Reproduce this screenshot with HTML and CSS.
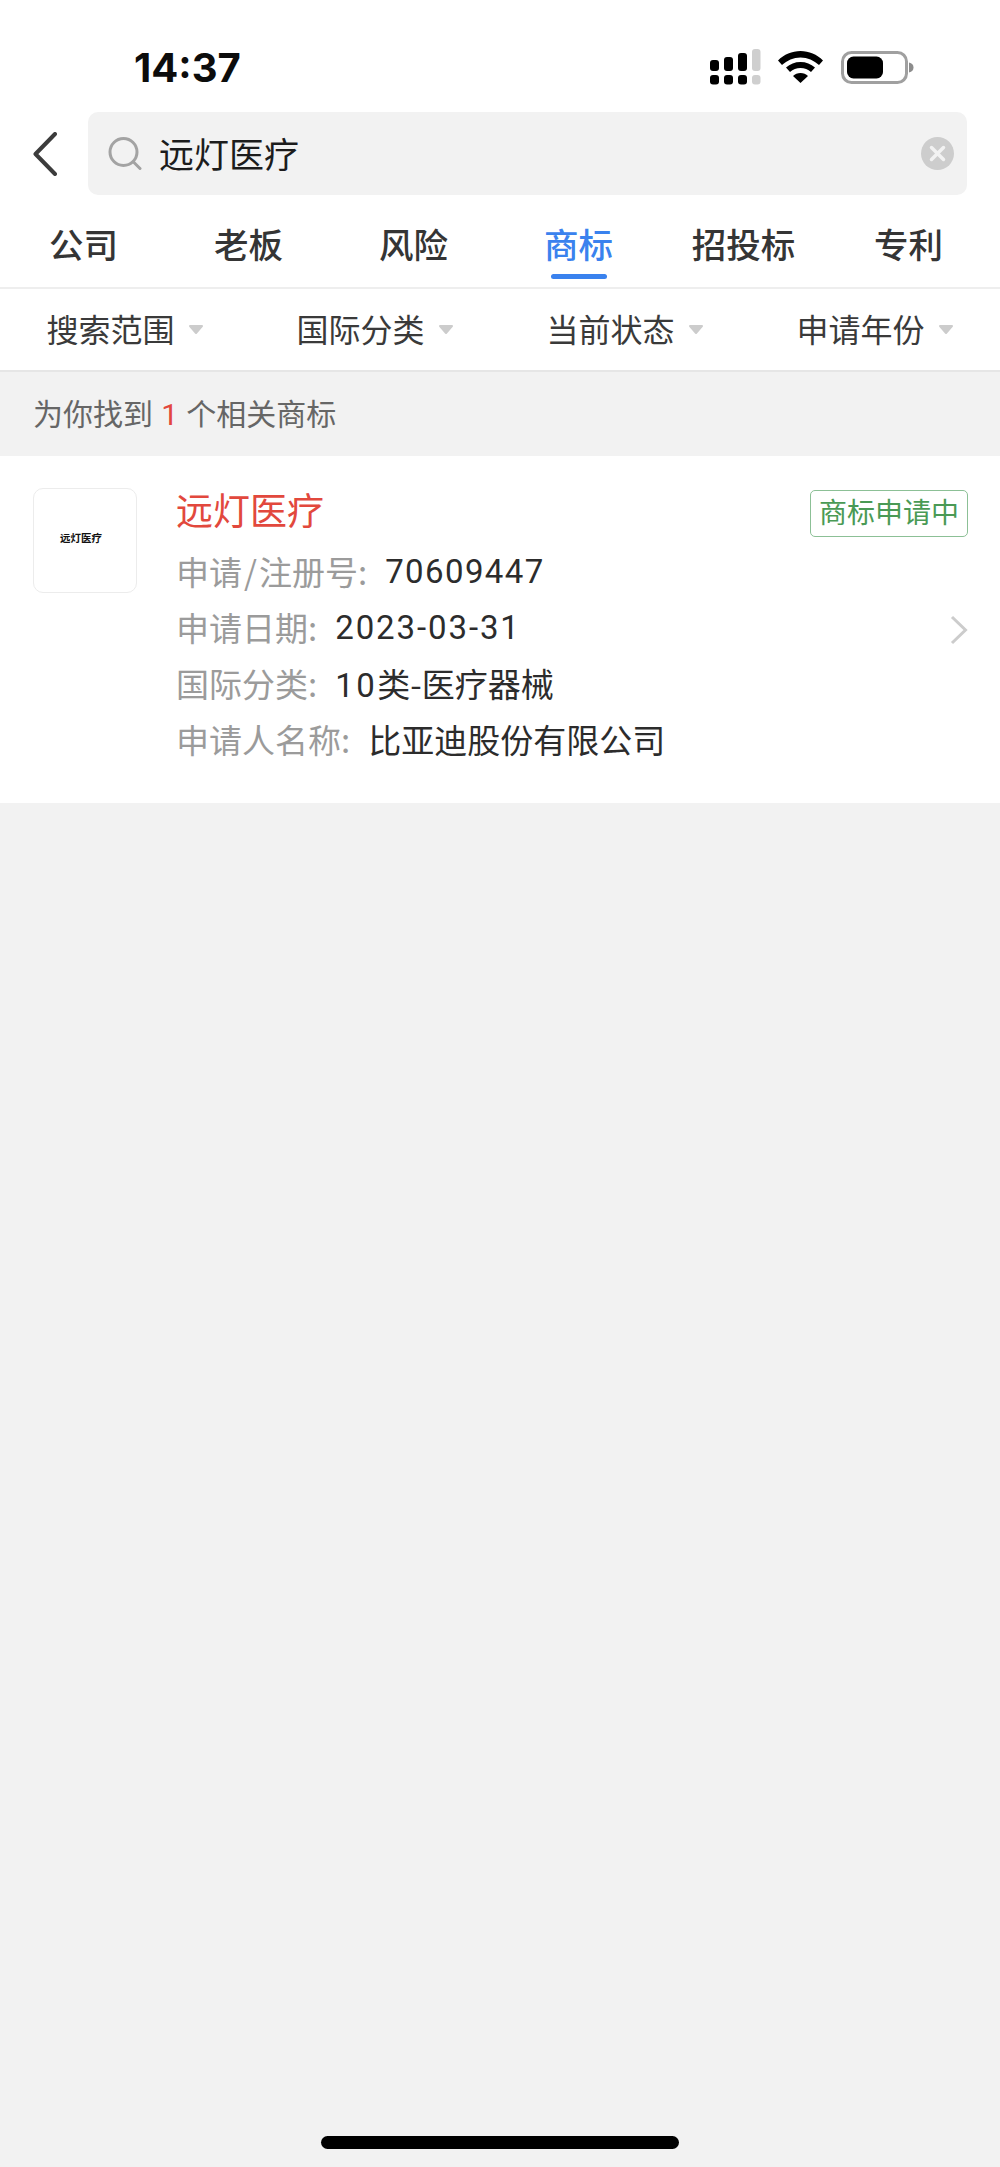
FILE: index.html
```html
<!DOCTYPE html>
<html lang="zh-CN">
<head>
<meta charset="utf-8">
<title>商标搜索</title>
<link rel="stylesheet" href="styles.css">
</head>
<body>
<div class="page">
  <header class="status">
    <span class="clock">14:37</span>
    <div class="status-icons">
      <svg class="ic-signal" width="51" height="36" viewBox="0 0 51 36">
        <rect x="0" y="11" width="9" height="11" rx="3"/>
        <rect x="14" y="8" width="9" height="14" rx="3"/>
        <rect x="28" y="4" width="9" height="18" rx="3"/>
        <rect class="off" x="42" y="0" width="8.500" height="22" rx="3"/>
        <rect x="0" y="26" width="9" height="9.500" rx="3"/>
        <rect x="14" y="26" width="9" height="9.500" rx="3"/>
        <rect x="28" y="26" width="9" height="9.500" rx="3"/>
        <rect class="off" x="42" y="26" width="8.500" height="9.500" rx="3"/>
      </svg>
      <svg class="ic-wifi" width="45" height="32" viewBox="0 0 45 32">
        <path d="M22.500 0C14 0 6 3.500 0 9.500L4 14C9 9.500 15.500 6.500 22.500 6.500C29.500 6.500 36 9.500 41 14L45 9.500C39 3.500 31 0 22.500 0Z"/>
        <path d="M22.500 11C17 11 12 13 8 16.500L12 21C15 18.500 18.500 17 22.500 17C26.500 17 30 18.500 33 21L37 16.500C33 13 28 11 22.500 11Z"/>
        <path d="M22.500 22C19.500 22 17 23 15 25L22.500 32L30 25C28 23 25.500 22 22.500 22Z"/>
      </svg>
      <svg class="ic-battery" width="73" height="33" viewBox="0 0 73 33">
        <rect x="1.500" y="1.500" width="64" height="30" rx="9" class="shell"/>
        <rect x="6" y="5.500" width="36" height="22" rx="6.500"/>
        <path class="nub" d="M68 11.500C71 12 72.500 14 72.500 16.500C72.500 19 71 21 68 21.500Z"/>
      </svg>
    </div>
  </header>

  <div class="search-row">
    <svg class="ic-back" width="24" height="44" viewBox="0 0 24 44">
      <path d="M22 2L2.500 22L22 42"/>
    </svg>
    <div class="search-box">
      <svg class="ic-search" width="34" height="34" viewBox="0 0 34 34">
        <circle cx="15.500" cy="15" r="13.500"/>
        <path d="M25.500 25L32 31.500"/>
      </svg>
      <span class="query">远灯医疗</span>
      <svg class="ic-clear" width="33" height="33" viewBox="0 0 33 33">
        <circle cx="16.500" cy="16.500" r="16.500"/>
        <path d="M10.500 10.500L22.500 22.500M22.500 10.500L10.500 22.500"/>
      </svg>
    </div>
  </div>

  <nav class="tabs">
    <a class="tab">公司</a>
    <a class="tab">老板</a>
    <a class="tab">风险</a>
    <a class="tab active">商标</a>
    <a class="tab">招投标</a>
    <a class="tab">专利</a>
  </nav>

  <div class="filters">
    <div class="filter"><span>搜索范围</span><svg class="caret" width="16" height="11" viewBox="0 0 16 11"><path d="M2 2H14L8 9Z"/></svg></div>
    <div class="filter"><span>国际分类</span><svg class="caret" width="16" height="11" viewBox="0 0 16 11"><path d="M2 2H14L8 9Z"/></svg></div>
    <div class="filter"><span>当前状态</span><svg class="caret" width="16" height="11" viewBox="0 0 16 11"><path d="M2 2H14L8 9Z"/></svg></div>
    <div class="filter"><span>申请年份</span><svg class="caret" width="16" height="11" viewBox="0 0 16 11"><path d="M2 2H14L8 9Z"/></svg></div>
  </div>

  <p class="summary">为你找到 <em>1</em> 个相关商标</p>

  <article class="card">
    <div class="logo"><span>远灯医疗</span></div>
    <div class="info">
      <h2 class="name">远灯医疗</h2>
      <div class="row"><span class="label">申请<span class="slash">/</span>注册号:</span><span class="value digits">70609447</span></div>
      <div class="row"><span class="label">申请日期:</span><span class="value digits date">2023-03-31</span></div>
      <div class="row"><span class="label">国际分类:</span><span class="value"><span class="digits count">10</span>类-医疗器械</span></div>
      <div class="row"><span class="label">申请人名称:</span><span class="value">比亚迪股份有限公司</span></div>
    </div>
    <div class="side">
      <span class="badge">商标申请中</span>
      <svg class="ic-more" width="18" height="30" viewBox="0 0 18 30">
        <path d="M2 2L15.500 15L2 28"/>
      </svg>
    </div>
  </article>

  <div class="filler"></div>
  <footer class="home"><span class="home-bar"></span></footer>
</div>
</body>
</html>
```

FILE: styles.css
```css
* { box-sizing: border-box; }

html, body {
  margin: 0;
  padding: 0;
}

body {
  background: #f2f2f2;
  font-family: "Noto Sans CJK SC", "Liberation Sans", sans-serif;
  color: #333;
}

.page {
  display: flex;
  flex-direction: column;
  min-height: 2167px;
}

/* status bar */
.status {
  height: 112px;
  background: #fff;
  display: flex;
  justify-content: space-between;
  padding: 49px 86px 0 134px;
}

.clock {
  font-family: "Inter", "Liberation Sans", sans-serif;
  font-weight: 700;
  font-size: 40px;
  line-height: 38px;
  color: #0c0c0c;
  height: 38px;
}

.status-icons {
  display: flex;
  align-items: flex-start;
}

.status-icons svg { display: block; flex: none; }
.ic-wifi { margin: 2px 0 0 17px; }
.ic-battery { margin: 2px 0 0 18px; }
.ic-signal .off { fill: #cfcfcf; }
.ic-battery .shell { fill: #fff; stroke: #a0a0a0; stroke-width: 3; }
.ic-battery .nub { fill: #8c8c8c; }

/* search row */
.search-row {
  height: 83px;
  background: #fff;
  display: flex;
  align-items: center;
  padding: 0 33px;
}

.ic-back { flex: none; margin-right: 31px; }
.ic-back path { fill: none; stroke: #3c3c3c; stroke-width: 4; stroke-linecap: round; stroke-linejoin: round; }

.search-box {
  flex: 1;
  height: 83px;
  background: #f2f2f2;
  border-radius: 10px;
  display: flex;
  align-items: center;
  padding: 0 13px 0 20px;
}

.ic-search { flex: none; }
.ic-search circle, .ic-search path { fill: none; stroke: #a3a3a3; stroke-width: 3; stroke-linecap: round; }

.query {
  flex: 1;
  margin-left: 17px;
  padding-bottom: 3px;
  font-size: 35px;
  color: #1c1c1c;
}

.ic-clear circle { fill: #cdcdcd; }
.ic-clear path { fill: none; stroke: #f2f2f2; stroke-width: 3.500; stroke-linecap: round; }

/* tabs */
.tabs {
  height: 94px;
  background: #fff;
  display: grid;
  grid-template-columns: repeat(6, 165px);
  padding-left: 1px;
  border-bottom: 2px solid #eeeeee;
}

.tab {
  position: relative;
  text-align: center;
  font-size: 34.500px;
  font-weight: 500;
  line-height: 97px;
  color: #353535;
}

.tab.active { color: #3a82ee; }

.tab.active::after {
  content: "";
  position: absolute;
  left: 50%;
  top: 79px;
  width: 56px;
  height: 5px;
  margin-left: -28px;
  border-radius: 3px;
  background: #3a82ee;
}

/* filters */
.filters {
  height: 83px;
  background: #fff;
  display: grid;
  grid-template-columns: repeat(4, 1fr);
  border-bottom: 2px solid #e6e6e6;
}

.filter {
  display: flex;
  align-items: center;
  justify-content: center;
  gap: 13px;
  font-size: 32px;
  color: #3a3a3a;
}

.filter span { padding-bottom: 3px; }

.caret { flex: none; }
.caret path { fill: #cccccc; stroke: #cccccc; stroke-width: 2; stroke-linejoin: round; }

/* result count */
.summary {
  margin: 0;
  height: 84px;
  padding-left: 33px;
  font-size: 30px;
  line-height: 80px;
  color: #666;
}

.summary em {
  font-style: normal;
  color: #e2483d;
  font-family: "Roboto", sans-serif;
  margin: 0 1.500px;
}

/* result card */
.card {
  height: 347px;
  background: #fff;
  display: flex;
  padding: 27px 32px 0 33px;
}

.logo {
  flex: none;
  width: 104px;
  height: 105px;
  margin-top: 5px;
  border: 1px solid #ececec;
  border-radius: 10px;
  display: flex;
  justify-content: center;
  padding: 41px 8px 0 0;
}

.logo span {
  font-size: 10.500px;
  line-height: 16px;
  font-weight: 700;
  color: #111;
}

.info {
  flex: 1;
  margin-left: 39px;
}

.name {
  margin: 0 0 8px;
  font-size: 37px;
  line-height: 52px;
  font-weight: 400;
  color: #e2483d;
}

.row {
  height: 56px;
  display: flex;
  align-items: center;
  font-size: 33px;
}

.label {
  color: #9b9b9b;
  margin-right: 18px;
}

.slash { margin: 0 2px; }

.value { color: #2c2c2c; }
.digits { font-family: "Roboto", sans-serif; letter-spacing: 1.400px; }
.digits.date { letter-spacing: 1.900px; }
.digits.count { letter-spacing: 2.500px; }

.side {
  display: flex;
  flex-direction: column;
  align-items: flex-end;
}

.badge {
  margin-top: 7px;
  height: 47px;
  padding: 0 8px;
  border: 1.500px solid #8cc096;
  border-radius: 5px;
  font-size: 28px;
  line-height: 41px;
  color: #4a9a55;
  white-space: nowrap;
}

.ic-more { margin-top: 78px; }
.ic-more path { fill: none; stroke: #cccccc; stroke-width: 3; }

/* bottom */
.filler { flex: 1; }

.home {
  height: 31px;
  display: flex;
  justify-content: center;
}

.home-bar {
  width: 358px;
  height: 13px;
  border-radius: 7px;
  background: #000;
}
```
